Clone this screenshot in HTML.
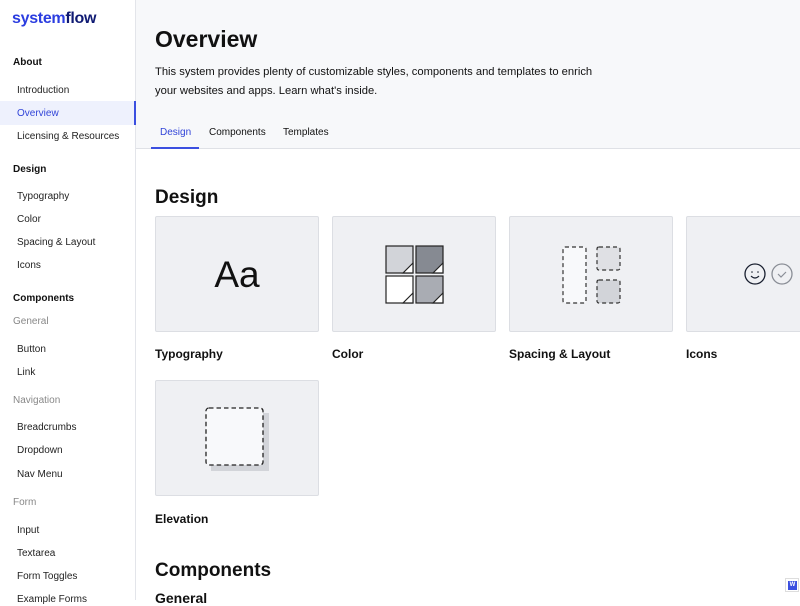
<!DOCTYPE html>
<html><head><style>
*{margin:0;padding:0;box-sizing:border-box}
body{width:800px;height:600px;overflow:hidden;font-family:"Liberation Sans",sans-serif;background:#fff;color:#111;position:relative}
.a{position:absolute;white-space:nowrap}
.side{position:absolute;left:0;top:0;width:136px;height:600px;border-right:1px solid #e3e5ea;background:#fff}
.h{font-weight:bold;font-size:10px;left:13px;color:#111}
.i{font-size:10px;left:17px;color:#222}
.g{font-size:10px;left:13px;color:#888}
.card{position:absolute;width:164px;height:116px;background:#eff0f3;border:1px solid #dcdee3;border-radius:2px}
.lbl{position:absolute;font-weight:bold;font-size:12px;color:#111}
</style></head><body>
<div class="side">
<div class="a" style="left:12px;top:10px;font-size:16px;font-weight:bold;color:#2b3de0;letter-spacing:-0.3px">system<span style="color:#0f1a73">flow</span></div>
<div class="a h" style="top:57px">About</div>
<div class="a i" style="top:85px">Introduction</div>
<div class="a" style="left:0;top:101px;width:136px;height:24px;background:#eef1fd;border-right:2px solid #3b4fe0"></div>
<div class="a i" style="top:108px;color:#3144d8">Overview</div>
<div class="a i" style="top:131px">Licensing &amp; Resources</div>
<div class="a h" style="top:164px">Design</div>
<div class="a i" style="top:191px">Typography</div>
<div class="a i" style="top:214px">Color</div>
<div class="a i" style="top:237px">Spacing &amp; Layout</div>
<div class="a i" style="top:260px">Icons</div>
<div class="a h" style="top:293px">Components</div>
<div class="a g" style="top:316px">General</div>
<div class="a i" style="top:344px">Button</div>
<div class="a i" style="top:367px">Link</div>
<div class="a g" style="top:395px">Navigation</div>
<div class="a i" style="top:422px">Breadcrumbs</div>
<div class="a i" style="top:445px">Dropdown</div>
<div class="a i" style="top:469px">Nav Menu</div>
<div class="a g" style="top:497px">Form</div>
<div class="a i" style="top:525px">Input</div>
<div class="a i" style="top:548px">Textarea</div>
<div class="a i" style="top:571px">Form Toggles</div>
<div class="a i" style="top:594px">Example Forms</div>
</div>
<div class="a" style="left:136px;top:0;width:664px;height:149px;background:#f7f8fa;border-bottom:1px solid #dfe1e6"></div>
<div class="a" style="left:155px;top:26px;font-size:23px;font-weight:bold">Overview</div>
<div class="a" style="left:155px;top:63px;font-size:11.2px;line-height:18.5px;color:#111">This system provides plenty of customizable styles, components and templates to enrich<br>your websites and apps. Learn what's inside.</div>
<div class="a" style="left:160px;top:127px;font-size:10px;color:#3144d8">Design</div>
<div class="a" style="left:151px;top:147px;width:48px;height:2px;background:#3b4fe0"></div>
<div class="a" style="left:209px;top:127px;font-size:10px">Components</div>
<div class="a" style="left:283px;top:127px;font-size:10px">Templates</div>
<div class="a" style="left:155px;top:187px;font-size:19px;font-weight:bold">Design</div>
<div class="card" style="left:155px;top:216px"><div class="a" style="left:0;width:162px;text-align:center;top:37px;font-size:37px;color:#111">Aa</div></div>
<div class="card" style="left:332px;top:216px"><svg class="a" style="left:52px;top:28px" width="60" height="60" viewBox="0 0 60 60" fill="none" stroke="#222" stroke-width="1.2">
<rect x="1" y="1" width="27" height="27" fill="#d2d4d9"/><rect x="31" y="1" width="27" height="27" fill="#868a92"/><rect x="1" y="31" width="27" height="27" fill="#fff"/><rect x="31" y="31" width="27" height="27" fill="#a9acb3"/>
<path d="M28 18L18 28H28Z M58 18L48 28H58Z M28 48L18 58H28Z M58 48L48 58H58Z" fill="#fff"/></svg></div>
<div class="card" style="left:509px;top:216px"><svg class="a" style="left:51px;top:28px" width="62" height="60" viewBox="0 0 62 60" fill="none" stroke="#333" stroke-width="1.2" stroke-dasharray="4 3">
<rect x="2" y="2" width="23" height="56" rx="2" fill="#f8f9fb"/><rect x="36" y="2" width="23" height="23" rx="2" fill="#dfe0e4"/><rect x="36" y="35" width="23" height="23" rx="2" fill="#d2d4d9"/></svg></div>
<div class="card" style="left:686px;top:216px;width:130px"><svg class="a" style="left:56px;top:45px" width="52" height="24" viewBox="0 0 52 24" fill="none">
<circle cx="12" cy="12" r="10" stroke="#1a2030" stroke-width="1.3"/><circle cx="9" cy="10" r=".8" fill="#1a2030"/><circle cx="15" cy="10" r=".8" fill="#1a2030"/><path d="M8 14q4 4 8 0" stroke="#1a2030" stroke-width="1.2"/>
<circle cx="39" cy="12" r="10" stroke="#8a8e96" stroke-width="1.3"/><path d="M35 12l3 3 5-5" stroke="#8a8e96" stroke-width="1.2"/></svg></div>
<div class="lbl" style="left:155px;top:347px">Typography</div>
<div class="lbl" style="left:332px;top:347px">Color</div>
<div class="lbl" style="left:509px;top:347px">Spacing &amp; Layout</div>
<div class="lbl" style="left:686px;top:347px">Icons</div>
<div class="card" style="left:155px;top:380px"><svg class="a" style="left:48px;top:25px" width="66" height="66" viewBox="0 0 66 66" fill="none">
<rect x="7" y="7" width="58" height="58" fill="#d2d4d9"/>
<rect x="2" y="2" width="57" height="57" rx="3" fill="#f8f9fb" stroke="#222" stroke-width="1.3" stroke-dasharray="4.5 3"/></svg></div>
<div class="lbl" style="left:155px;top:512px">Elevation</div>
<div class="a" style="left:155px;top:560px;font-size:19px;font-weight:bold">Components</div>
<div class="a" style="left:155px;top:590px;font-size:14px;font-weight:bold">General</div>
<div class="a" style="left:785px;top:578px;width:14px;height:14px;border:1px solid #ddd;background:#fff"><div class="a" style="left:2px;top:2px;width:9px;height:9px;background:#3b4fe0;color:#fff;font-size:6px;font-weight:bold;text-align:center;line-height:9px">W</div></div>
</body></html>
